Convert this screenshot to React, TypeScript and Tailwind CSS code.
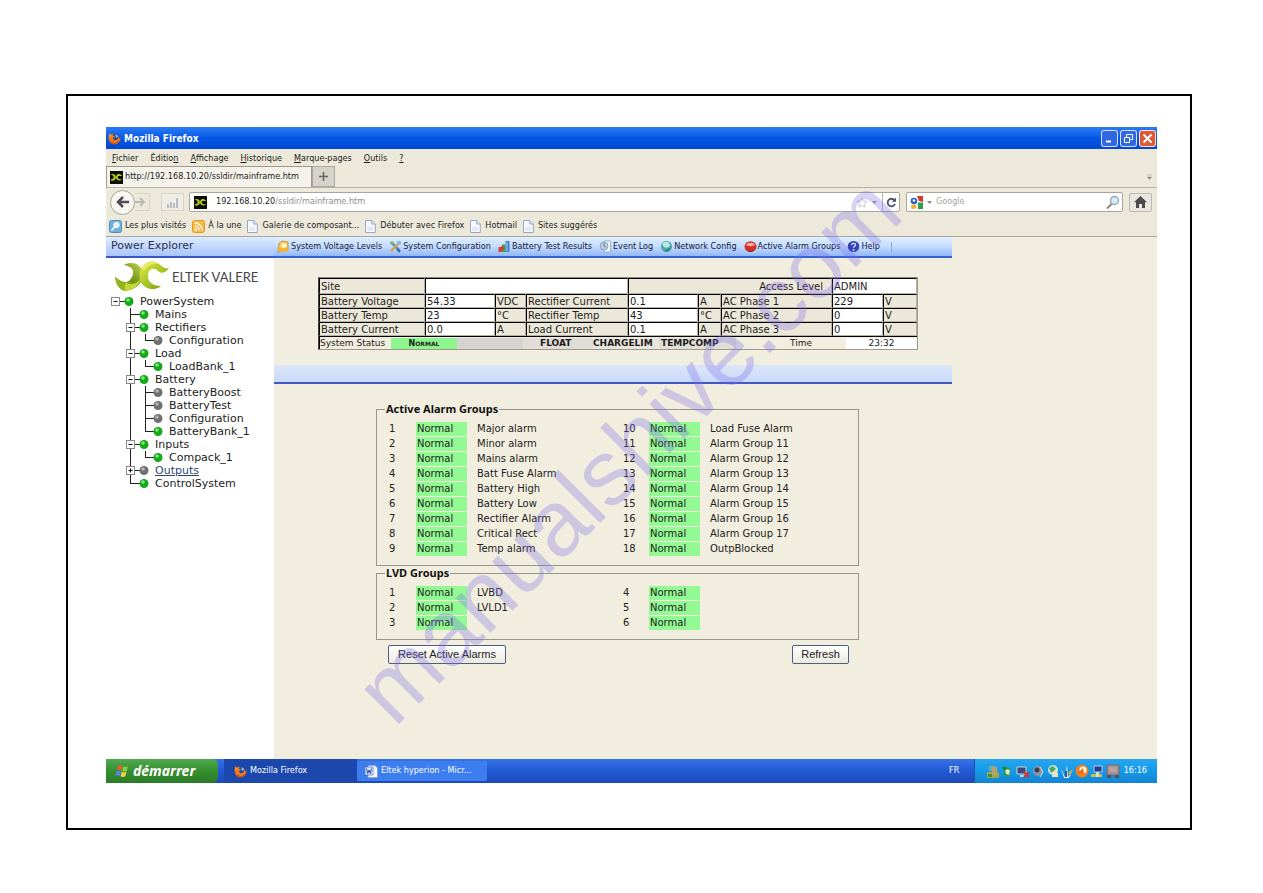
import type { ReactNode } from "react";

const UI = "font-['DejaVu_Sans_Condensed','DejaVu_Sans',sans-serif]";
const WIDE = "font-['DejaVu_Sans',sans-serif]";

function FirefoxIcon() {
  return (
    <svg width="13" height="13" viewBox="0 0 13 13" aria-hidden="true">
      <circle cx="6.500" cy="6.500" r="5" fill="#27469c" />
      <path d="M7 2.500c1.500-.3 3 .5 3.300 2L8 6z" fill="#7db2e8" />
      <path
        d="M1.200 1.200 3 2.600c1-.8 2-.9 3-.8L4.600 3.600l2.400.7-1.600 1.300c-.8 1.600.5 2.900 2.100 2.700 2-.2 3-2 2.300-4.300 1 .9 1.400 1.900 1.200 3L12.300 5c.6 3.900-2 7.300-5.800 7.300C3 12.300.6 9.800.6 6.300c0-1.800.2-3.500.6-5.100z"
        fill="#ee7a1d"
      />
      <path d="M1.400 6c0 3 2.500 5 5 4.900 2.200 0 3.800-1 4.900-3-.2 2.400-2.200 3.900-4.800 3.900C3.300 11.800 1 9.500 1.400 6z" fill="#c9400f" />
      <path d="M1.500 2.500 2.800 3.700 2 5.500z" fill="#fbd15a" />
    </svg>
  );
}

function EltekFavicon() {
  return (
    <svg width="13" height="13" viewBox="0 0 13 13" aria-hidden="true">
      <rect width="13" height="13" fill="#0c0f04" />
      <path d="M.8 3.500C3 2.400 5.600 3.200 6 5.800 6.200 8.300 4.500 9.800 1.800 10L.6 7.800c1.700.5 3-.2 3-1.600C3.500 4.800 2.300 4 .8 3.500z" fill="#a7c520" />
      <path d="M12.300 4.300C11 5.300 10 5 9.200 4.700 8 4.500 7.600 5.500 7.800 6.500 8.100 8 9.800 8.700 12 8.300 10.300 10.200 7 9.700 6.200 7.300 5.600 5 7 2.900 9.200 3c1.200.1 2 1.300 3.100 1.300z" fill="#c4d82d" />
    </svg>
  );
}

function PageIcon() {
  return (
    <svg width="11" height="13" viewBox="0 0 11 13" aria-hidden="true">
      <path d="M.5.5h6.300l3.500 3.500v8.500H.5z" fill="#f6f8ff" stroke="#9aa5c4" />
      <path d="M6.800.5V4h3.500" fill="#dfe5f5" stroke="#9aa5c4" />
      <path d="M2 7h6v4H2z" fill="#e3e9f8" />
    </svg>
  );
}

function MostVisitedIcon() {
  return (
    <svg width="13" height="13" viewBox="0 0 13 13" aria-hidden="true">
      <rect x=".5" y=".5" width="12" height="12" rx="2" fill="#6fb1dc" stroke="#4d8fc0" />
      <circle cx="7.500" cy="5" r="2.700" fill="#d9f0ff" stroke="#fff" />
      <path d="m5.500 7-3 3.500" stroke="#fff" strokeWidth="1.500" />
    </svg>
  );
}

function FeedIcon() {
  return (
    <svg width="13" height="13" viewBox="0 0 13 13" aria-hidden="true">
      <rect x=".5" y=".5" width="12" height="12" rx="2" fill="#f5bb45" stroke="#dd9a2a" />
      <circle cx="3.800" cy="9.400" r="1.200" fill="#fff" />
      <path d="M2.800 5.800a4.500 4.500 0 0 1 4.500 4.500M2.800 3a7.300 7.300 0 0 1 7.300 7.300" fill="none" stroke="#fff" strokeWidth="1.300" />
    </svg>
  );
}

function EltekLogo() {
  return (
    <svg width="54" height="32" viewBox="0 0 54 32" aria-hidden="true">
      <defs>
        <linearGradient id="leafDark" x1="0" y1="1" x2="1" y2="0">
          <stop offset="0" stopColor="#a9c626" />
          <stop offset=".5" stopColor="#6f9418" />
          <stop offset="1" stopColor="#c8d84b" />
        </linearGradient>
        <linearGradient id="leafLight" x1="0" y1="0" x2="1" y2="1">
          <stop offset="0" stopColor="#e3e94a" />
          <stop offset=".55" stopColor="#a5c322" />
          <stop offset="1" stopColor="#6d9417" />
        </linearGradient>
      </defs>
      <path d="M9 4C16 0 26 2 28 12C29 20 22 29 10 30C5 29 1 24 0 16C4 19 7 21 11 21C16 20 19 14 18 9C16 6 13 5 9 4z" fill="url(#leafDark)" />
      <path d="M0 16C4 19 7 21 11 21C10 24 9 27 10 30C5 29 1 24 0 16z" fill="#94b41f" />
      <path d="M10 30C9 27 10 24 11 21C15 25 21 23 26 18C23 26 17 30 10 30z" fill="#c3d63a" />
      <path d="M27 6C31 0 40-1 44 3C48 6 50 8 54 7C51 12 46 13 43 10C39 6 34 8 33 13C32 20 37 25 46 25C39 31 28 28 25 19C24 13 25 9 27 6z" fill="url(#leafLight)" />
      <path d="M27 6C31 0 40-1 44 3C38 2 32 4 29 10C28 9 27 8 27 6z" fill="#e9ec6a" />
    </svg>
  );
}

type NodeProps = {
  label: string;
  level: 0 | 1 | 2;
  box?: "plus" | "minus";
  off?: boolean;
  last?: boolean;
  trunk?: boolean;
  link?: boolean;
};

const tree: NodeProps[] = [
  { label: "PowerSystem", level: 0, box: "minus" },
  { label: "Mains", level: 1 },
  { label: "Rectifiers", level: 1, box: "minus" },
  { label: "Configuration", level: 2, off: true, last: true, trunk: true },
  { label: "Load", level: 1, box: "minus" },
  { label: "LoadBank_1", level: 2, last: true, trunk: true },
  { label: "Battery", level: 1, box: "minus" },
  { label: "BatteryBoost", level: 2, off: true, trunk: true },
  { label: "BatteryTest", level: 2, off: true, trunk: true },
  { label: "Configuration", level: 2, off: true, trunk: true },
  { label: "BatteryBank_1", level: 2, last: true, trunk: true },
  { label: "Inputs", level: 1, box: "minus" },
  { label: "Compack_1", level: 2, last: true, trunk: true },
  { label: "Outputs", level: 1, box: "plus", off: true, link: true },
  { label: "ControlSystem", level: 1, last: true },
];

function TreeNode({ label, level, box, off, last, trunk, link }: NodeProps) {
  const width = [30, 45, 59][level];
  const ball = width - 11;
  const stem = level === 0 ? 5 : level === 1 ? 20 : 35;
  return (
    <li className="flex h-[13px] items-center">
      <svg width={width} height="13" viewBox={`0 0 ${width} 13`} className="shrink-0" aria-hidden="true">
        {trunk && <path d="M20.500 0v13" stroke="#222" />}
        {level > 0 && <path d={`M${stem + 0.5} 0v${last ? 7 : 13}`} stroke="#222" />}
        <path d={`M${stem} 6.500H${ball}`} stroke="#222" />
        {box && <rect x={stem - 3.5} y="2.500" width="8" height="8" fill="#fff" stroke="#888" />}
        {box && <path d={`M${stem - 1.5} 6.500h4`} stroke="#111" />}
        {box === "plus" && <path d={`M${stem + 0.5} 4.500v4`} stroke="#111" />}
        <circle cx={ball} cy="6.500" r="4.500" fill={off ? "#6f6f6f" : "#17a81c"} />
        <circle cx={ball - 1} cy="5" r="1.800" fill={off ? "#b5b5b5" : "#7be878"} />
      </svg>
      <a href="#" className={link ? "text-[#2f4672] underline" : "text-[#1c1c1c]"}>
        {label}
      </a>
    </li>
  );
}

function ToolIcon({ children }: { children: ReactNode }) {
  return (
    <svg width="13" height="13" viewBox="0 0 13 13" className="shrink-0" aria-hidden="true">
      {children}
    </svg>
  );
}

const tools: { label: string; icon: ReactNode }[] = [
  {
    label: "System Voltage Levels",
    icon: (
      <>
        <path d="M2 3.500 5 1l6 1v8L1 12z" fill="#f3c64b" stroke="#c58a21" strokeWidth=".8" />
        <path d="m4 4 5-1 1 4-5 1z" fill="#fff5cf" />
        <path d="M0 8h9l3 3.500H2z" fill="#f6b33a" />
      </>
    ),
  },
  {
    label: "System Configuration",
    icon: (
      <>
        <path d="m2 2 9 9" stroke="#5a8fca" strokeWidth="2.500" />
        <path d="m11 2-9 9" stroke="#d9a33b" strokeWidth="2.200" />
        <circle cx="10" cy="3" r="2.200" fill="#86b8e2" />
        <circle cx="3" cy="3" r="1.800" fill="#7fb85e" />
        <path d="m8 9 3 3" stroke="#3a66a8" strokeWidth="2" />
      </>
    ),
  },
  {
    label: "Battery Test Results",
    icon: (
      <>
        <path d="M7.500 1h4v11h-4z" fill="#3f7fd0" />
        <path d="M4 4.500h3.500V12H4z" fill="#3aa34c" />
        <path d="M.5 7H4v5H.5z" fill="#d8403a" />
        <path d="M8.500 2h1v9h-1z" fill="#a8ccf2" />
        <path d="m3 6 4 2-3 2z" fill="#e0342b" />
      </>
    ),
  },
  {
    label: "Event Log",
    icon: (
      <>
        <path d="M5 1h6.500v11H5z" fill="#f3f7fc" stroke="#8da4c2" strokeWidth=".8" />
        <circle cx="5" cy="6" r="4" fill="#b6cde0" stroke="#8fa6bf" />
        <path d="M5 3.500V6l1.800 1.200" fill="none" stroke="#5f7d9e" />
      </>
    ),
  },
  {
    label: "Network Config",
    icon: (
      <>
        <circle cx="6.500" cy="6.500" r="5.500" fill="#4ba6a6" />
        <path d="M2 4c3-4 8-2 8 1S6 8 4 7z" fill="#b9e8e0" />
        <path d="M4 11c3 1 7-1 7-5-1 3-4 4-7 5z" fill="#256d8e" />
      </>
    ),
  },
  {
    label: "Active Alarm Groups",
    icon: (
      <>
        <ellipse cx="6.500" cy="6.500" rx="6" ry="5.300" fill="#d92f25" />
        <path d="M2 5c2-3 7-3 9 0-2 1.500-7 1.500-9 0z" fill="#f7b9ad" />
        <path d="M2 9c3 2.500 6 2.500 9 0-2 4-7 4-9 0z" fill="#8f1712" />
      </>
    ),
  },
  {
    label: "Help",
    icon: (
      <>
        <ellipse cx="6.500" cy="6.500" rx="5.800" ry="5.500" fill="#3543b8" />
        <path d="M4.500 5c.3-2.300 4.200-2 4 0-.1 1.300-2 1.300-2 2.800" fill="none" stroke="#dfe5ff" strokeWidth="1.300" />
        <circle cx="6.500" cy="10" r=".9" fill="#dfe5ff" />
      </>
    ),
  },
];

function Cell({
  children,
  value,
  span,
  right,
}: {
  children?: ReactNode;
  value?: boolean;
  span?: number;
  right?: boolean;
}) {
  return (
    <td
      colSpan={span}
      className={`h-[14px] overflow-hidden border border-t-black border-r-[#b5b3a8] border-b-[#b5b3a8] border-l-black p-0 pl-px leading-[11px] whitespace-nowrap ${
        value ? "bg-white" : "bg-[#ece8d9]"
      } ${right ? "pr-2 text-right" : "text-left"}`}
    >
      {children}
    </td>
  );
}

const readings = [
  ["Battery Voltage", "54.33", "VDC", "Rectifier Current", "0.1", "A", "AC Phase 1", "229", "V"],
  ["Battery Temp", "23", "°C", "Rectifier Temp", "43", "°C", "AC Phase 2", "0", "V"],
  ["Battery Current", "0.0", "A", "Load Current", "0.1", "A", "AC Phase 3", "0", "V"],
];

function StatusTable() {
  return (
    <div className={`mr-[34px] ml-[44px] border border-t-[#8a8a80] border-r-[#9a9a90] border-b-[#9a9a90] border-l-[#444] text-[10px] text-[#1c1c1c] ${WIDE}`}>
      <table className="w-full table-fixed border-separate border-spacing-0">
        <colgroup>
          <col className="w-[106px]" />
          <col className="w-[70px]" />
          <col className="w-[31px]" />
          <col className="w-[102px]" />
          <col className="w-[70px]" />
          <col className="w-[23px]" />
          <col className="w-[111px]" />
          <col className="w-[51px]" />
          <col />
        </colgroup>
        <tbody>
          <tr className="h-4">
            <Cell>Site</Cell>
            <Cell value span={3} />
            <Cell span={3} right>
              Access Level
            </Cell>
            <Cell value span={2}>
              ADMIN
            </Cell>
          </tr>
          {readings.map((row) => (
            <tr key={row[0]}>
              {row.map((text, i) => (
                <Cell key={i} value={i % 3 === 1}>
                  {text}
                </Cell>
              ))}
            </tr>
          ))}
        </tbody>
      </table>
      <div className="flex h-[13px] items-center border-t border-l border-black text-[9px] leading-[11px] whitespace-nowrap">
        <span className="w-[71px]">System Status</span>
        <span className="w-[66px] bg-[#8df58d] text-center text-[8px] font-bold [font-variant:small-caps]">Normal</span>
        <span className="h-[11px] w-[66px] bg-[#d6d4d0]" />
        <b className="w-[70px] bg-[#dfddd6] pl-[17px]">FLOAT</b>
        <b className="w-[66px] bg-[#e8e5dc]">CHARGELIM</b>
        <b className="w-[77px] bg-[#e0ded7] pl-[2px]">TEMPCOMP</b>
        <span className="flex-1 pl-5 text-center">Time</span>
        <span className="w-[71px] bg-white text-center">23:32</span>
      </div>
    </div>
  );
}

const alarms = [
  ["Major alarm", "Load Fuse Alarm"],
  ["Minor alarm", "Alarm Group 11"],
  ["Mains alarm", "Alarm Group 12"],
  ["Batt Fuse Alarm", "Alarm Group 13"],
  ["Battery High", "Alarm Group 14"],
  ["Battery Low", "Alarm Group 15"],
  ["Rectifier Alarm", "Alarm Group 16"],
  ["Critical Rect", "Alarm Group 17"],
  ["Temp alarm", "OutpBlocked"],
];

const lvds = [
  ["LVBD", ""],
  ["LVLD1", ""],
  ["", ""],
];

function GroupBox({ title, rows }: { title: string; rows: string[][] }) {
  const state = <div className="h-[14px] bg-[#93f993] pl-px leading-[14px]">Normal</div>;
  return (
    <fieldset className="border border-[#96968c] pt-[5px] pb-[9px] pl-3">
      <legend className="-ml-1 px-px font-['Noto_Sans',sans-serif] text-[11px] leading-[14px] font-bold text-[#111]">
        {title}
      </legend>
      <table className="w-full table-fixed border-collapse text-[10px] leading-[14px] text-[#222]">
        <colgroup>
          <col className="w-[27px]" />
          <col className="w-[51px]" />
          <col className="w-[156px]" />
          <col className="w-[26px]" />
          <col className="w-[51px]" />
          <col />
        </colgroup>
        <tbody>
          {rows.map(([left, right], i) => (
            <tr key={i} className="h-[15px]">
              <td className="p-0">{i + 1}</td>
              <td className="p-0">{state}</td>
              <td className="p-0 pl-[10px]">{left}</td>
              <td className="p-0">{i + 1 + rows.length}</td>
              <td className="p-0">{state}</td>
              <td className="p-0 pl-[10px]">{right}</td>
            </tr>
          ))}
        </tbody>
      </table>
    </fieldset>
  );
}

function TitleBar() {
  const button = "flex size-[17px] items-center justify-center rounded-[3px] border border-white/80";
  return (
    <header className="flex h-[22px] items-center bg-linear-to-b from-[#2a7cf5] via-[#0656e6] to-[#0247d0] pr-px pl-[2px]">
      <FirefoxIcon />
      <h1 className={`flex-1 pl-[3px] text-[10px] font-bold text-white ${UI}`}>Mozilla Firefox</h1>
      <div className="flex gap-[2px]">
        <button aria-label="Réduire" className={`${button} bg-[#3167e0]`}>
          <svg width="11" height="11"><path d="M2 8.500h5" stroke="#fff" strokeWidth="2" /></svg>
        </button>
        <button aria-label="Restaurer" className={`${button} bg-[#3167e0]`}>
          <svg width="11" height="11" fill="none" stroke="#fff">
            <path d="M3.500 4V1.500h6v5H7M1.500 4.500h5v5h-5z" />
          </svg>
        </button>
        <button aria-label="Fermer" className={`${button} bg-[#dc5a35]`}>
          <svg width="11" height="11"><path d="m1.500 1.500 8 8m0-8-8 8" stroke="#fff" strokeWidth="2" /></svg>
        </button>
      </div>
    </header>
  );
}

const menus: [string, string, string][] = [
  ["", "F", "ichier"],
  ["Éditio", "n", ""],
  ["", "A", "ffichage"],
  ["", "H", "istorique"],
  ["", "M", "arque-pages"],
  ["", "O", "utils"],
  ["", "?", ""],
];

function BrowserChrome() {
  return (
    <div className={`bg-[#ece9da] text-[9px] text-[#1c1c1c] ${UI}`}>
      <nav className="flex h-[17px] items-center gap-3 pl-[6px]">
        {menus.map(([before, key, after]) => (
          <button key={before + key} className="leading-[12px]">
            {before}
            <u>{key}</u>
            {after}
          </button>
        ))}
      </nav>
      <div className="flex h-[22px] items-end border-b border-[#b5b3a8]">
        <div className="flex h-[21px] w-[206px] items-center gap-[2px] border border-b-0 border-[#9c9a92] bg-[#f4f2ea] pl-[3px] whitespace-nowrap">
          <EltekFavicon />
          http://192.168.10.20/ssldir/mainframe.htm
        </div>
        <button aria-label="Nouvel onglet" className="flex h-[21px] w-[23px] items-center justify-center border border-[#a9a79e] bg-[#d5d3c9]">
          <svg width="9" height="9"><path d="M4.500 0v9M0 4.500h9" stroke="#666" strokeWidth="1.600" /></svg>
        </button>
        <button aria-label="Liste des onglets" className="mr-1 ml-auto flex h-[20px] items-center">
          <svg width="7" height="7"><path d="M1 1h5M1.500 3h4l-2 2.500z" fill="#777" stroke="#999" strokeWidth=".5" /></svg>
        </button>
      </div>
      <div className="flex h-[28px] items-center pr-[5px] pl-[4px]">
        <button aria-label="Précédent" className="flex size-[25px] shrink-0 items-center justify-center rounded-full border border-[#a5a5a0] bg-[#f7f6f1]">
          <svg width="14" height="12" fill="none" stroke="#4c4c50" strokeWidth="2.500">
            <path d="M7 1 2 6l5 5M2 6h11" />
          </svg>
        </button>
        <button aria-label="Suivant" className="flex h-[18px] w-[15px] shrink-0 items-center border border-l-0 border-[#d6d4ca]">
          <svg width="11" height="10" fill="none" stroke="#b9b9b4" strokeWidth="2">
            <path d="m5 1 4 4-4 4M0 5h9" />
          </svg>
        </button>
        <button aria-label="Signal" className="ml-[11px] flex h-[18px] w-[23px] shrink-0 items-center justify-center border border-[#d6d4ca] bg-[#efede3]">
          <svg width="12" height="11" fill="#b9bcc4"><path d="M0 7h2v4H0zM3 5h2v6H3zM6 6h2v5H6zM9 1h2v10H9z" /></svg>
        </button>
        <div className="ml-[5px] flex h-[20px] flex-1 items-center rounded-[2px] border border-[#a8a69c] bg-white pl-[4px]">
          <EltekFavicon />
          <div className="flex-1 pl-[9px] whitespace-nowrap">
            192.168.10.20<span className="text-[#8e8e8e]">/ssldir/mainframe.htm</span>
          </div>
          <svg width="12" height="11" className="mr-[3px]" fill="#fff" stroke="#c9c9d4">
            <path d="m6 .8 1.500 3.200 3.500.4-2.600 2.300.8 3.500L6 8.400l-3.200 1.800.8-3.500L1 4.400 4.500 4z" />
          </svg>
          <svg width="7" height="5" className="mr-[4px]" fill="#999"><path d="M1 1h5L3.500 4z" /></svg>
          <button aria-label="Actualiser" className="flex h-[18px] w-[17px] items-center justify-center border-l border-[#b5b3aa]">
            <svg width="11" height="11" fill="none" stroke="#4c5470" strokeWidth="1.800">
              <path d="M8.500 3.200A3.800 3.800 0 1 0 9 7" />
              <path d="M10 .5v4.300H5.700z" fill="#4c5470" stroke="none" />
            </svg>
          </button>
        </div>
        <div className="ml-[6px] flex h-[20px] w-[217px] items-center rounded-[2px] border border-[#a8a69c] bg-white pl-[3px]">
          <svg width="13" height="13" viewBox="0 0 13 13" aria-hidden="true">
            <rect width="13" height="13" fill="#fff" />
            <path d="M7 0h6v6L9 5z" fill="#d9352a" />
            <path d="M8 6.500h5V13H8z" fill="#2f9e48" />
            <path d="M1 10c1-2 5-2 5.500 0S5 13 3 13s-2-1-2-3z" fill="#f0b429" />
            <circle cx="4" cy="5" r="3.300" fill="#2b5fc9" />
            <circle cx="4" cy="4.500" r="1.300" fill="#fff" />
          </svg>
          <svg width="7" height="5" className="mx-[3px] shrink-0" fill="#888"><path d="M1 1h5L3.500 4z" /></svg>
          <input aria-label="Recherche Google" placeholder="Google" className="min-w-0 flex-1 bg-transparent text-[9px] outline-none placeholder:text-[#a3a3a3]" />
          <svg width="15" height="15" className="mr-[2px] shrink-0" fill="none">
            <path d="m7 8.500-5 5" stroke="#9a8478" strokeWidth="2" />
            <circle cx="9.500" cy="5.500" r="4" fill="#d7ecf8" stroke="#96a9b8" strokeWidth="1.400" />
          </svg>
        </div>
        <button aria-label="Accueil" className="ml-[6px] flex h-[19px] w-[23px] shrink-0 items-center justify-center rounded-[2px] border border-[#bbb9b0] bg-[#e8e6de]">
          <svg width="13" height="12" fill="#4a4a4e"><path d="M6.500 0 13 6.300h-2V12H8V8H5v4H2V6.300H0z" /></svg>
        </button>
      </div>
      <nav className="flex h-[21px] items-center gap-[6px] border-b border-[#a9a89e] pl-[3px] whitespace-nowrap">
        <a href="#" className="flex items-center gap-[3px]"><MostVisitedIcon />Les plus visités</a>
        <a href="#" className="flex items-center gap-[3px]"><FeedIcon />À la une</a>
        {["Galerie de composant...", "Débuter avec Firefox", "Hotmail", "Sites suggérés"].map((name) => (
          <a key={name} href="#" className="flex items-center gap-1"><PageIcon />{name}</a>
        ))}
      </nav>
    </div>
  );
}

function Taskbar() {
  return (
    <footer className={`flex h-[24px] items-stretch bg-linear-to-b from-[#3473e8] via-[#2258d2] to-[#1c4bb8] text-[9px] text-white ${UI}`}>
      <button className="flex w-[112px] items-center gap-[3px] rounded-r-[6px] bg-linear-to-b from-[#4fa94f] via-[#35902f] to-[#2b7a28] pl-[9px] font-['Noto_Sans',sans-serif] text-[14px] leading-[16px] font-bold italic">
        <svg width="15" height="14" viewBox="0 0 15 14" aria-hidden="true">
          <path d="M3 2c1.700-1 3-.9 4.500 0L6.300 6.500C5 5.700 3.500 5.600 1.700 6.500z" fill="#ee5a2a" />
          <path d="M8.300 2.400c1.500.9 3 .9 4.700 0l-1.300 4.500c-1.500.9-3 .8-4.500 0z" fill="#8bd04a" />
          <path d="M1.500 7.300c1.700-.8 3-.8 4.500 0L4.800 12c-1.500-.9-3-.8-4.600 0z" fill="#4f8bf0" />
          <path d="M6.900 7.800c1.500.8 3 .8 4.600 0L10.300 12.300c-1.600.9-3.200.8-4.700 0z" fill="#fbcf3c" />
        </svg>
        démarrer
      </button>
      <button className="ml-[6px] flex w-[133px] items-center gap-[3px] bg-[#1c47ad] pl-[10px]">
        <FirefoxIcon />
        Mozilla Firefox
      </button>
      <button className="my-[2px] flex w-[130px] items-center gap-[3px] rounded-[2px] bg-[#3c7df0] pl-[8px] whitespace-nowrap">
        <svg width="13" height="13" viewBox="0 0 13 13" aria-hidden="true">
          <path d="M3 .5h7l2.500 2.500v9.500H3z" fill="#f4f7ff" stroke="#8fa4d4" />
          <path d="M0 2h8v8H0z" fill="#dfe8fb" stroke="#2f57ad" strokeWidth=".6" />
          <path d="m1.500 3.500 1.200 5L4 5l1.300 3.500 1.200-5" fill="none" stroke="#234a9e" />
        </svg>
        Eltek hyperion - Micr...
      </button>
      <div className="ml-auto flex w-[33px] items-center pl-[8px]">FR</div>
      <div className="flex w-[183px] items-center justify-between border-l border-[#1557a8] bg-linear-to-b from-[#27a5f2] via-[#139be8] to-[#1583d2] pr-[10px] pl-[12px]">
        <svg width="134" height="15" viewBox="0 0 134 15" aria-hidden="true">
          <path d="M2 2h6v5H2z" fill="#7aa9a0" /><path d="M0 8h12v6H0z" fill="#9aad4c" /><path d="M5 3h5v8H5z" fill="#b9a06c" /><path d="M1 10h4v3H1z" fill="#4c8a3a" />
          <path d="m16 2 8 3-2 8-5-2z" fill="#2d9a45" /><path d="m18 5 5 1-1 5-3-1z" fill="#d7f0d0" /><path d="m15 3 5 1-2 3z" fill="#1b7a35" />
          <path d="M30 3h9v7h-9z" fill="#3b4a78" stroke="#c8d0e0" /><path d="M33 11h5v2h-5z" fill="#c8d0e0" /><path d="m37 8 5 5m0-5-5 5" stroke="#d92f25" strokeWidth="1.800" />
          <circle cx="51" cy="7" r="5" fill="#8b95a6" /><circle cx="50" cy="6" r="2.500" fill="#39404e" /><path d="m53 3 3 5-3 5" fill="none" stroke="#cfd6df" />
          <circle cx="66" cy="6" r="5" fill="#cfe6d4" /><path d="m62 4 4-2 3 3-5 4z" fill="#4fa565" /><path d="m66 8 5 1v4h-6z" fill="#e9e3c6" />
          <path d="m74 4 4 9 2-12 1 12 5-8-4 9h-5z" fill="#e5e9ec" /><path d="m81 9 4-4-2 7z" fill="#d3a33b" /><path d="M78 7h2v6h-2z" fill="#32589c" />
          <circle cx="95" cy="7" r="6.500" fill="#f08020" /><circle cx="96" cy="6" r="3.500" fill="#fff2dc" /><path d="m91 9 5-5 1 6z" fill="#e2691a" />
          <path d="M107 2h8v6h-8z" fill="#233e8c" stroke="#b8c8ea" /><path d="M104 10h11v3h-11z" fill="#c9c05a" /><path d="M109 8h3v5h-3z" fill="#d9dcc0" />
          <path d="M120 1h12v10h-12z" fill="#a68e8a" stroke="#716d78" /><path d="M122 3h8v5h-8z" fill="#b9a39c" /><path d="M120 11h4v3h-4zM128 11h4v3h-4z" fill="#53525c" />
        </svg>
        <time>16:16</time>
      </div>
    </footer>
  );
}

export default function App() {
  const action =
    "flex h-[19px] items-center justify-center rounded-[2px] border border-[#4d5f80] bg-linear-to-b from-white to-[#eceadf] font-['Liberation_Sans',sans-serif] text-[11px] text-[#222]";
  return (
    <div className="min-h-screen bg-white pt-[94px] pr-[71px] pb-[62px] pl-[66px]">
      <div className="border-2 border-black pt-[31px] pr-[33px] pb-[45px] pl-[38px]">
        <div className="relative overflow-hidden">
          <TitleBar />
          <BrowserChrome />
          <div className={`flex bg-[#f1eedf] ${WIDE}`}>
            <aside className="w-[168px] shrink-0 bg-white">
              <h2 className="flex h-[21px] items-center border-b-2 border-[#3a55c8] bg-linear-to-b from-[#dcebff] to-[#a9c5fa] pl-[5px] text-[11px] font-normal text-[#2a3350]">
                Power Explorer
              </h2>
              <div className="flex h-[36px] items-center gap-[3px] pt-[1px] pl-[9px]">
                <EltekLogo />
                <span className="font-['Lato',sans-serif] text-[13px] leading-[16px] whitespace-nowrap text-[#444]">ELTEK VALERE</span>
              </div>
              <ul className="pt-px pl-[4px] text-[11px] leading-[13px]">
                {tree.map((node, i) => (
                  <TreeNode key={i} {...node} />
                ))}
              </ul>
            </aside>
            <main className="min-w-0 max-w-[678px] flex-1 pb-[95px]">
              <nav className={`flex h-[21px] items-center gap-[7px] border-b-2 border-[#3560cf] bg-linear-to-b from-[#e0efff] via-[#c4dcff] to-[#93b8f8] pl-[3px] text-[9px] whitespace-nowrap text-[#18203c] ${UI}`}>
                {tools.map((tool) => (
                  <a key={tool.label} href="#" className="flex items-center gap-px">
                    <ToolIcon>{tool.icon}</ToolIcon>
                    {tool.label}
                  </a>
                ))}
                <span className="ml-1 h-[10px] border-l border-[#8ba3cf]" />
              </nav>
              <div className="pt-[19px]">
                <StatusTable />
              </div>
              <div className="mt-[15px] h-[19px] border-b-2 border-[#4458c4] bg-linear-to-b from-[#dbe6f8] to-[#c9dafc]" />
              <div className="mr-[93px] ml-[102px] pt-[18px]">
                <GroupBox title="Active Alarm Groups" rows={alarms} />
                <GroupBox title="LVD Groups" rows={lvds} />
                <div className="flex justify-between pt-[5px] pr-[10px] pl-3">
                  <button className={`${action} w-[118px]`}>Reset Active Alarms</button>
                  <button className={`${action} w-[57px]`}>Refresh</button>
                </div>
              </div>
            </main>
          </div>
          <Taskbar />
          <div className="pointer-events-none absolute inset-0 flex items-center justify-center pr-[8px] pb-[10px] select-none" aria-hidden="true">
            <span className="-rotate-45 font-['Liberation_Sans',sans-serif] text-[93px] leading-[100px] whitespace-nowrap text-[#7a6be8]/30">
              manualshive.com
            </span>
          </div>
        </div>
      </div>
    </div>
  );
}
